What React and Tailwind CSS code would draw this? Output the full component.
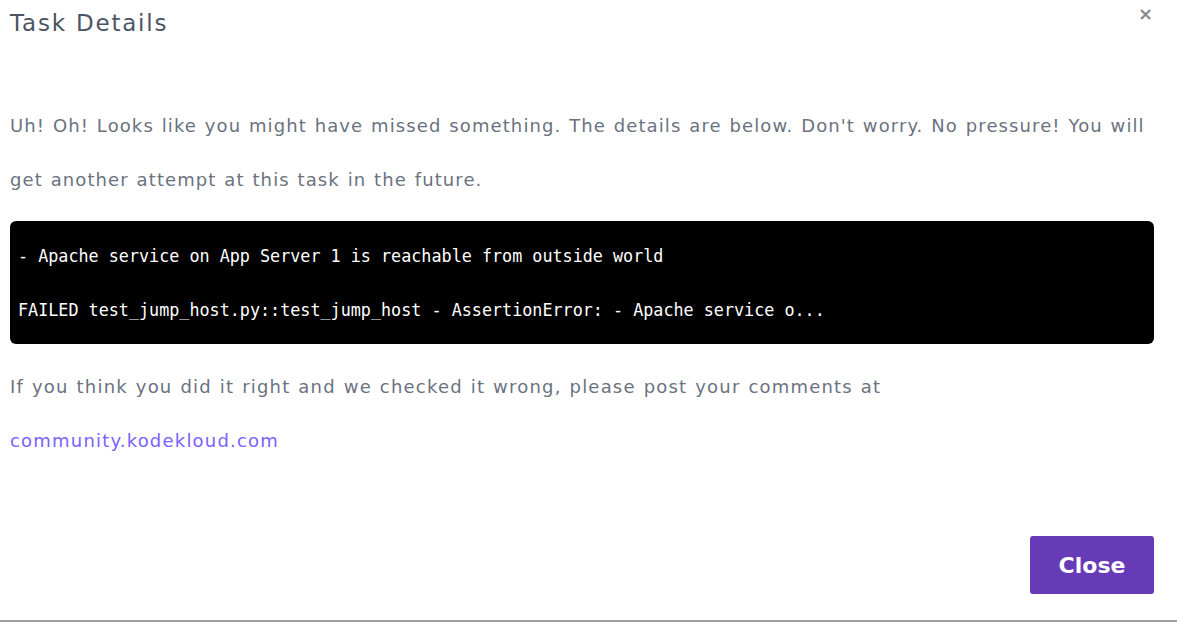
import React from 'react';

const SANS = { fontFamily: '"DejaVu Sans", "Open Sans", sans-serif' };

export default function App() {
  return (
    <div className="w-[1177px] h-[622px] bg-white relative border-b-2 border-[#a0a0a0] overflow-hidden" style={SANS}>
      <button
        type="button"
        className="absolute right-[24px] top-[5px] text-[#8a8a8a] text-[18px] font-bold leading-none"
      >
        ×
      </button>

      <div className="pl-[10px] pr-[23px]">
        <h2 className="text-[23px] leading-[46px] text-[#4b5563] font-normal tracking-[1.8px]">Task Details</h2>

        <div className="mt-[53px] text-[18px] leading-[54px] text-[#6b7280] tracking-[1.1px] [word-spacing:1px]">
          Uh! Oh! Looks like you might have missed something. The details are below. Don't worry. No pressure! You will get another attempt at this task in the future.
        </div>

        <pre
          className="mt-[14px] bg-black text-white rounded-[6px] px-[8px] pt-[22px] pb-[20px] text-[16.75px] leading-[27px] whitespace-pre-wrap"
          style={{ fontFamily: '"DejaVu Sans Mono", "Liberation Mono", monospace' }}
        >
{`- Apache service on App Server 1 is reachable from outside world

FAILED test_jump_host.py::test_jump_host - AssertionError: - Apache service o...`}
        </pre>

        <div className="mt-[16px] text-[18px] leading-[54px] text-[#6b7280] tracking-[1.2px] [word-spacing:1px]">
          If you think you did it right and we checked it wrong, please post your comments at
          <br />
          <a href="#" className="text-[#7b61ff]">community.kodekloud.com</a>
        </div>

        <div className="flex justify-end mt-[68px]">
          <button
            type="button"
            className="w-[124px] h-[58px] bg-[#673ab7] text-white rounded-[3px] text-[22px] font-semibold"
          >
            Close
          </button>
        </div>
      </div>
    </div>
  );
}
